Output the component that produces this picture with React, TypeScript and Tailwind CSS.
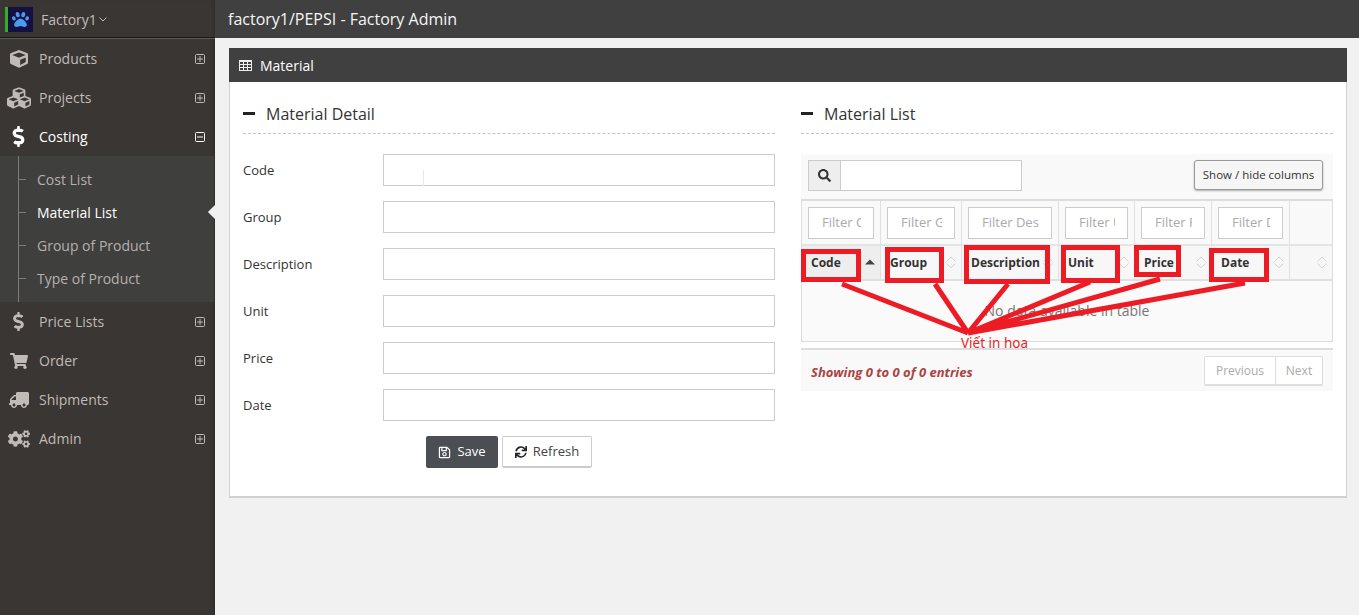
import { ReactNode } from "react"
import { FaCube, FaCubes, FaDollarSign, FaShoppingCart, FaTruck, FaCogs, FaRegSave, FaSync, FaSearch, FaPaw } from "react-icons/fa"

const Expander = ({ open, active }: { open?: boolean; active?: boolean }) => (
  <svg width="10" height="10" viewBox="0 0 10 10" className={active ? "text-white" : "text-[#c0bbb7]"}>
    <rect x="0.5" y="0.5" width="9" height="9" rx="1" fill="none" stroke="currentColor" />
    <path d={open ? "M2 5h6" : "M2 5h6M5 2v6"} stroke="currentColor" />
  </svg>
)

const NavItem = ({ icon, label, active, open }: { icon: ReactNode; label: string; active?: boolean; open?: boolean }) => (
  <div className={`h-[39px] flex items-center pr-[10px] text-[14px] ${active ? "text-white" : "text-[#c0bbb7]"}`}>
    <div className="w-[39px] flex justify-center pl-[1px] pr-[3px] text-[18px]">{icon}</div>
    <div className="flex-1">{label}</div>
    <Expander open={open} active={active} />
  </div>
)

const SubItem = ({ label, active }: { label: string; active?: boolean }) => (
  <div className={`relative h-[33px] flex items-center pl-[37px] text-[14px] ${active ? "text-white" : "text-[#b5b1ad]"}`}>
    <div className="absolute left-[18px] top-[16px] w-[8px] h-px bg-[#7d7b79]" />
    {label}
    {active && <div className="absolute right-[-6px] top-[11px] w-[10px] h-[10px] rotate-45 bg-[#f1f1f1]" />}
  </div>
)

const Field = ({ label }: { label: string }) => (
  <div className="flex items-center h-[32px] mb-[15px]">
    <div className="w-[140px] pt-[2px] text-[13px] text-[#333]">{label}</div>
    <div className="flex-1 h-[32px] border border-[#ccc] bg-white" />
  </div>
)

const SectionTitle = ({ title }: { title: string }) => (
  <div className="h-[39px] pb-[1px] flex items-center gap-[11px] border-b border-dashed border-[#c4c4c4] text-[16px] text-[#333]">
    <div className="w-[12px] h-[3px] bg-[#222]" />
    {title}
  </div>
)

const SortArrows = () => (
  <svg width="10" height="13" viewBox="0 0 10 13" fill="none" stroke="#d4d4d4">
    <path d="M.5 5.5 5 1l4.5 4.5M.5 7.5 5 12l4.5-4.5" />
  </svg>
)

const columns = [
  { w: "w-[79px]", filter: "Filter C", head: "Code" },
  { w: "w-[81px]", filter: "Filter G", head: "Group" },
  { w: "w-[97px]", filter: "Filter Des", head: "Description" },
  { w: "w-[76px]", filter: "Filter U", head: "Unit" },
  { w: "w-[77px]", filter: "Filter P", head: "Price" },
  { w: "w-[78px]", filter: "Filter D", head: "Date" },
]

export default function App() {
  return (
    <div className="relative flex h-[615px] w-[1359px] overflow-hidden bg-[#f1f1f1] font-['Open_Sans',sans-serif]">
      <div className="w-[215px] shrink-0 bg-[#3a3633] shadow-[inset_-4px_0_4px_-3px_rgba(0,0,0,0.25)]">
        <div className="h-[39px] border-b border-b-[#5a5a5a] shadow-[inset_0_-1px_0_#1c1a19] flex items-center pl-[5px]">
          <div className="w-[3px] h-[25px] bg-[#35ad28]" />
          <div className="w-[25px] h-[25px] bg-[#14103f] flex items-center justify-center text-[#4a9bf0] text-[17px]">
            <FaPaw />
          </div>
          <div className="ml-[8px] text-[14px] text-[#c0bbb7]">Factory1</div>
          <svg width="8" height="5" viewBox="0 0 8 5" fill="none" stroke="#c0bbb7" className="ml-[2px] mt-[1px]">
            <path d="M.5.5 4 4 7.500.5" />
          </svg>
        </div>
        <NavItem icon={<FaCube />} label="Products" />
        <NavItem icon={<FaCubes className="text-[24px]" />} label="Projects" />
        <NavItem icon={<FaDollarSign className="text-[21px]" />} label="Costing" active open />
        <div className="relative h-[146px] pt-[7px] bg-[#3f3f3e] mr-px">
          <div className="absolute left-[18px] top-0 bottom-0 w-px bg-[#7d7b79]" />
          <SubItem label="Cost List" />
          <SubItem label="Material List" active />
          <SubItem label="Group of Product" />
          <SubItem label="Type of Product" />
        </div>
        <NavItem icon={<FaDollarSign className="text-[19px]" />} label="Price Lists" />
        <NavItem icon={<FaShoppingCart />} label="Order" />
        <NavItem icon={<FaTruck className="text-[20px] -scale-x-100" />} label="Shipments" />
        <NavItem icon={<FaCogs className="text-[22px]" />} label="Admin" />
      </div>

      <div className="flex-1 min-w-0">
        <div className="h-[38px] bg-[#404040] flex items-center pl-[13px] text-[16px] text-[#f5f5f5]">factory1/PEPSI - Factory Admin</div>

        <div className="ml-[14px] mr-[12px] mt-[10px] border-x border-b-2 border-[#d0d0d0] bg-white h-[450px]">
          <div className="-mx-px h-[34px] bg-[#404040] flex items-center pl-[10px] gap-[8px] text-[14px] text-white">
            <svg width="13" height="11" viewBox="0 0 13 11" fill="#eee" fillRule="evenodd">
              <path d="M0 0h13v11H0zM1 2v2h3V2zM5 2v2h3V2zM9 2v2h3V2zM1 5v2h3V5zM5 5v2h3V5zM9 5v2h3V5zM1 8v2h3V8zM5 8v2h3V8zM9 8v2h3V8z" />
            </svg>
            Material
          </div>
          <div className="flex gap-[26px] px-[13px] pt-[13px]">
            <div className="w-[532px]">
              <SectionTitle title="Material Detail" />
              <div className="pt-[20px]">
                <Field label="Code" />
                <Field label="Group" />
                <Field label="Description" />
                <Field label="Unit" />
                <Field label="Price" />
                <Field label="Date" />
              </div>
              <div className="flex pl-[183px] gap-[4px]">
                <div className="w-[72px] h-[32px] rounded-[2px] bg-[#4b4f54] text-white text-[13px] flex items-center justify-center gap-[6px]">
                  <FaRegSave className="text-[13px]" />
                  Save
                </div>
                <div className="w-[90px] h-[32px] rounded-[2px] bg-white border border-[#ccc] border-b-2 text-[#444] text-[13px] flex items-center justify-center gap-[6px]">
                  <FaSync className="text-[12px] text-[#222]" />
                  Refresh
                </div>
              </div>
            </div>

            <div className="w-[532px]">
              <SectionTitle title="Material List" />
              <div className="mt-[20px] bg-[#f9f9f9]">
                <div className="h-[45px] flex items-start justify-between pt-[6px] pl-[7px] pr-[10px]">
                  <div className="flex h-[31px] w-[214px] border border-[#ccc]">
                    <div className="w-[32px] bg-[#eee] border-r border-[#ccc] flex items-center justify-center text-[#333] text-[13px]">
                      <FaSearch />
                    </div>
                    <div className="flex-1 bg-white" />
                  </div>
                  <div className="h-[30px] w-[129px] rounded-[3px] border border-[#999] bg-[#f6f6f6] shadow-[0_1px_2px_rgba(0,0,0,0.3)] flex items-center justify-center text-[11.5px] text-[#333]">
                    Show / hide columns
                  </div>
                </div>
                <div className="border border-[#ddd] border-t-2 border-b-0">
                  <div className="flex h-[45px] bg-[#f9f9f9] border-b-2 border-[#e4e4e4]">
                    {columns.map((c) => (
                      <div key={c.head} className={`${c.w} px-[6px] shrink-0 border-r border-[#e0e0e0] flex items-center`}>
                        <div className="w-full h-[32px] bg-white border border-[#ccc] pl-[13px] pr-[12px] flex items-center">
                          <div className="overflow-hidden whitespace-nowrap text-[13px] text-[#aaa]">{c.filter}</div>
                        </div>
                      </div>
                    ))}
                    <div className="flex-1" />
                  </div>
                  <div className="flex h-[35px] bg-[#f7f7f7] border-b-2 border-[#e0e0e0]">
                    {columns.map((c, i) => (
                      <div
                        key={c.head}
                        className={`${c.w} pl-[9px] ${i == 0 ? "bg-[#eee]" : ""} pr-[5px] shrink-0 border-r border-[#e0e0e0] flex items-center justify-between text-[12px] font-bold text-[#333]`}
                      >
                        {c.head}
                        {i == 0 ? (
                          <svg width="10" height="6" viewBox="0 0 10 6" className="mb-[2px]">
                            <path d="M5 .5 10 5.500H0z" fill="#444" />
                          </svg>
                        ) : (
                          <SortArrows />
                        )}
                      </div>
                    ))}
                    <div className="flex-1 flex items-center justify-end pr-[5px]">
                      <SortArrows />
                    </div>
                  </div>
                  <div className="h-[61px] pb-[2px] border-b border-[#ddd] bg-[#fafafa] flex items-center justify-center text-[14px] text-[#777]">
                    No data available in table
                  </div>
                </div>
                <div className="h-[6px] bg-white" />
                <div className="h-[43px] border-t-2 border-[#ddd] flex items-center justify-between pl-[10px] pr-[10px]">
                  <div className="mt-[4px] text-[13px] italic font-bold text-[#a94442]">Showing 0 to 0 of 0 entries</div>
                  <div className="flex h-[30px] rounded-[2px] border border-[#ddd] border-b-2 bg-white text-[12px] text-[#aaa]">
                    <div className="w-[71px] pt-[1px] flex items-center justify-center border-r border-[#ddd]">Previous</div>
                    <div className="w-[46px] pt-[1px] flex items-center justify-center">Next</div>
                  </div>
                </div>
              </div>
            </div>
          </div>
        </div>
      </div>

      <svg width="1359" height="615" className="absolute left-0 top-0 pointer-events-none" fill="none" stroke="#ed1c24">
        <g strokeWidth="5">
          <rect x="803.5" y="251.5" width="55" height="28" />
          <rect x="887.5" y="249.5" width="54" height="31" />
          <rect x="966.5" y="247.5" width="81" height="34" />
          <rect x="1063.5" y="247.5" width="54" height="33" />
          <rect x="1136.5" y="247.5" width="42" height="27" />
          <rect x="1211.5" y="250.5" width="55" height="29" />
        </g>
        <path strokeWidth="5" d="M842 284 968 333M935 284 968 333M1008 284 968 333M1090 282 968 333M1160 279 968 333M1245 283 968 333" />
      </svg>
      <div className="absolute left-[961px] top-[335px] text-[13.5px] leading-[16px] text-[#ed1c24] font-['Noto_Sans',sans-serif]">Viết in hoa</div>
      <div className="absolute left-[423px] top-[170px] w-px h-[16px] bg-[#e8e8e8]" />
    </div>
  )
}
